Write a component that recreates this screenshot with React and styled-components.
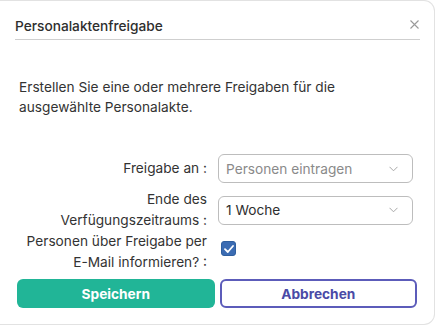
import React, { useState } from 'react';
import styled, { createGlobalStyle } from 'styled-components';

const GlobalStyle = createGlobalStyle`
    html, body {
        margin: 0;
        padding: 0;
        background: #ffffff;
    }
    body {
        font-family: Inter, "Noto Sans", "Liberation Sans", sans-serif;
        color: #333333;
    }
`;

const Chevron = () => (
    <svg width="9" height="6" viewBox="0 0 9 6" fill="none">
        <path d="M0.5 0.8 L4.5 4.8 L8.5 0.8" stroke="#a8a8a8" strokeWidth="1" />
    </svg>
);

const CloseIcon = () => (
    <svg width="9" height="9" viewBox="0 0 9 9" fill="none">
        <path d="M0.5 0.5 L8.5 8.5 M8.5 0.5 L0.5 8.5" stroke="#9a9a9a" strokeWidth="1.1" />
    </svg>
);

const SelectBox = ({ value, placeholder }) => (
    <Select>
        <SelectText $placeholder={!value}>{value || placeholder}</SelectText>
        <Chevron />
    </Select>
);

const App = () => {
    const [notify, setNotify] = useState(true);

    return (
        <>
            <GlobalStyle />
            <Modal>
                <Header>
                    <Title>Personalaktenfreigabe</Title>
                    <CloseButton><CloseIcon /></CloseButton>
                </Header>
                <Body>
                    <Intro>
                        Erstellen Sie eine oder mehrere Freigaben für die
                        <br />
                        ausgewählte Personalakte.
                    </Intro>
                    <Form>
                        <FormRow>
                            <Label>Freigabe an :</Label>
                            <SelectBox placeholder="Personen eintragen" />
                        </FormRow>
                        <FormRow $gap={6}>
                            <Label>Ende des<br />Verfügungszeitraums :</Label>
                            <SelectBox value="1 Woche" />
                        </FormRow>
                        <FormRow>
                            <Label>Personen über Freigabe per<br />E-Mail informieren? :</Label>
                            <CheckCell>
                                <Checkbox $checked={notify} onClick={() => setNotify(!notify)}>
                                    {notify && (
                                        <svg width="10" height="8" viewBox="0 0 10 8" fill="none">
                                            <path d="M1 4.2 L3.8 7 L9 1" stroke="#ffffff" strokeWidth="1.8" strokeLinecap="round" strokeLinejoin="round" />
                                        </svg>
                                    )}
                                </Checkbox>
                            </CheckCell>
                        </FormRow>
                    </Form>
                    <Actions>
                        <Button $primary>Speichern</Button>
                        <Button>Abbrechen</Button>
                    </Actions>
                </Body>
            </Modal>
        </>
    );
};

const Modal = styled.div`
    width: 435px;
    height: 325px;
    box-sizing: border-box;
    background: #ffffff;
    border: 1px solid #e2e2e2;
    border-left: none;
    border-radius: 0 11px 11px 0;
    display: flex;
    flex-direction: column;
`;

const Header = styled.div`
    margin: 0 14px 0 15px;
    padding: 15px 0 3px;
    border-bottom: 1px solid #cfcfcf;
    display: flex;
    align-items: center;
    justify-content: space-between;
`;

const Title = styled.div`
    font-size: 13.7px;
    line-height: 20px;
    font-weight: 500;
    color: #2e2e2e;
`;

const CloseButton = styled.div`
    width: 9px;
    height: 9px;
    display: flex;
    margin-right: 1px;
    margin-top: -4px;
    cursor: pointer;
`;

const Body = styled.div`
    padding: 0 17px;
    display: flex;
    flex-direction: column;
`;

const Intro = styled.p`
    margin: 37px 0 0 2px;
    font-size: 13.7px;
    line-height: 20px;
    color: #333333;
`;

const Form = styled.div`
    margin-top: 37px;
    display: flex;
    flex-direction: column;
`;

const FormRow = styled.div`
    display: grid;
    grid-template-columns: 190px 195px;
    column-gap: 11px;
    align-items: center;
    margin-top: ${p => p.$gap || 0}px;
`;

const Label = styled.div`
    text-align: right;
    font-size: 13.7px;
    line-height: 21px;
    color: #333333;
`;

const Select = styled.div`
    height: 29px;
    box-sizing: border-box;
    border: 1px solid #bdbdbd;
    border-radius: 6px;
    padding: 0 14px 0 7px;
    display: flex;
    align-items: center;
    justify-content: space-between;
    background: #ffffff;
`;

const SelectText = styled.span`
    font-size: 13.7px;
    color: ${p => (p.$placeholder ? '#8a8a8a' : '#2e2e2e')};
`;

const CheckCell = styled.div`
    display: flex;
    padding-left: 3px;
    margin-bottom: 7px;
`;

const Checkbox = styled.div`
    width: 15px;
    height: 15px;
    box-sizing: border-box;
    border-radius: 3px;
    background: ${p => (p.$checked ? '#3b6cb3' : '#ffffff')};
    border: 1px solid ${p => (p.$checked ? '#2f5f9f' : '#999999')};
    display: flex;
    align-items: center;
    justify-content: center;
    cursor: pointer;
`;

const Actions = styled.div`
    margin-top: 6px;
    display: grid;
    grid-template-columns: 1fr 1fr;
    column-gap: 5px;
`;

const Button = styled.button`
    height: 29px;
    box-sizing: border-box;
    border-radius: 6px;
    font-family: inherit;
    font-size: 13.7px;
    font-weight: 700;
    cursor: pointer;
    background: ${p => (p.$primary ? '#21b597' : '#ffffff')};
    color: ${p => (p.$primary ? '#ffffff' : '#4a4aa6')};
    border: ${p => (p.$primary ? 'none' : '2px solid #5c5cba')};
`;

export default App;
